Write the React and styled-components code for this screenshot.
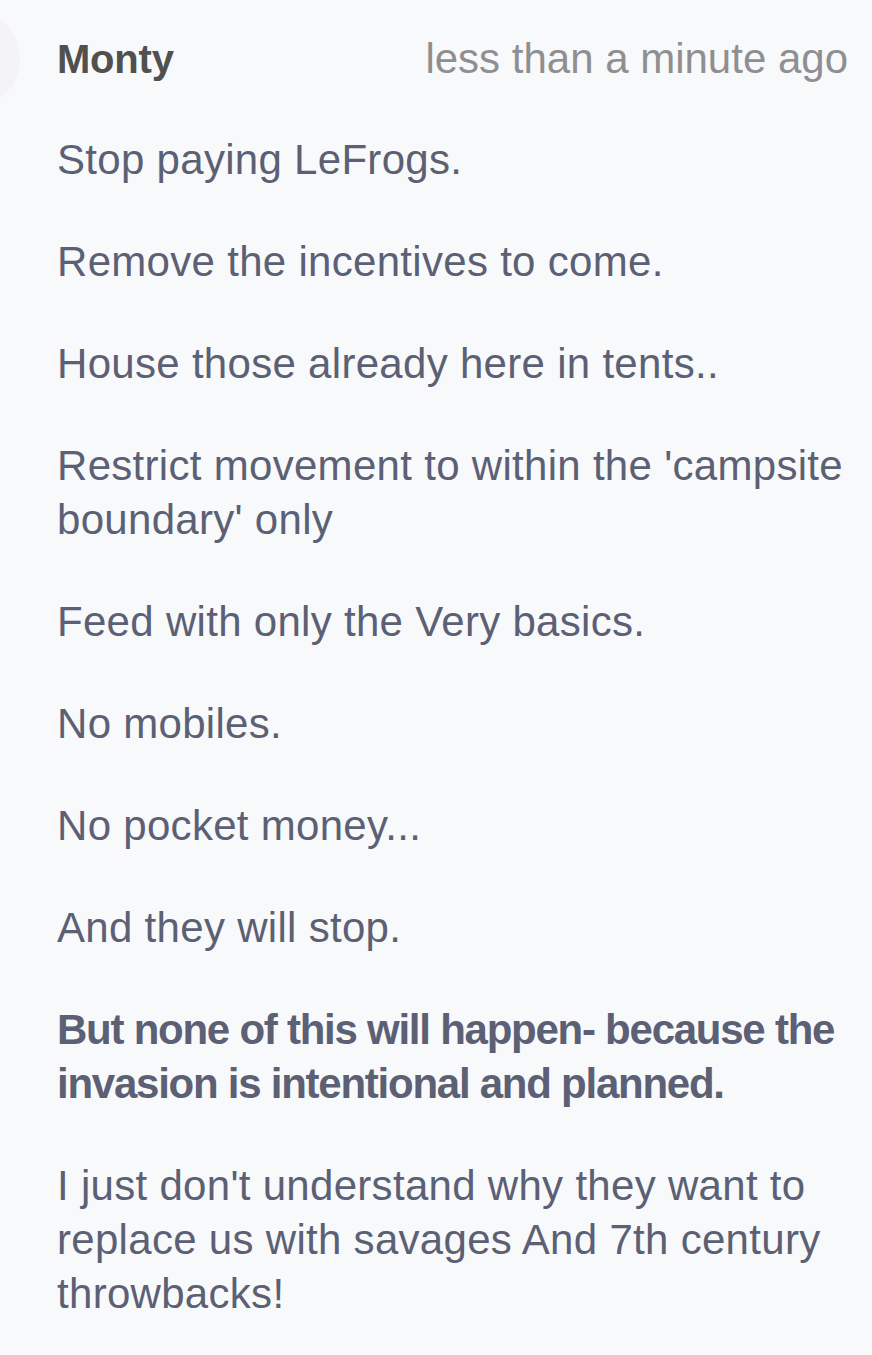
import styled, { createGlobalStyle } from "styled-components";

const paragraphs = [
    { text: "Stop paying LeFrogs." },
    { text: "Remove the incentives to come." },
    { text: "House those already here in tents.." },
    { text: "Restrict movement to within the 'campsite boundary' only" },
    { text: "Feed with only the Very basics." },
    { text: "No mobiles." },
    { text: "No pocket money..." },
    { text: "And they will stop." },
    { text: "But none of this will happen- because the invasion is intentional and planned.", bold: true },
    { text: "I just don't understand why they want to replace us with savages And 7th century throwbacks!" },
];

export default function App() {
    return (
        <>
            <GlobalStyle />
            <Comment>
                <Avatar />
                <Content>
                    <Header>
                        <Author>Monty</Author>
                        <Time>less than a minute ago</Time>
                    </Header>
                    <Body>
                        {paragraphs.map((p, i) => (
                            <Paragraph key={i} $bold={p.bold}>{p.text}</Paragraph>
                        ))}
                    </Body>
                </Content>
            </Comment>
        </>
    );
}

const GlobalStyle = createGlobalStyle`
    html, body {
        margin: 0;
        padding: 0;
        background: #f8f9fb;
    }
    body {
        font-family: "Liberation Sans", Arial, Helvetica, sans-serif;
        -webkit-font-smoothing: antialiased;
    }
`

const Comment = styled.div`
    display: flex;
    align-items: flex-start;
    column-gap: 37px;
    padding: 10px 24px 40px 0;
    min-height: 1355px;
    box-sizing: border-box;
`

const Avatar = styled.div`
    flex: 0 0 auto;
    width: 98px;
    height: 98px;
    margin-left: -78px;
    border-radius: 50%;
    background-color: #f3f3f8;
`

const Content = styled.div`
    flex: 1;
    min-width: 0;
    padding-top: 22px;
`

const Header = styled.div`
    display: flex;
    justify-content: space-between;
    align-items: baseline;
    line-height: 54px;
    margin-bottom: 47px;
`

const Author = styled.span`
    font-size: 40px;
    font-weight: 700;
    color: #50504e;
    letter-spacing: -0.2px;
`

const Time = styled.span`
    font-size: 42px;
    color: #8f8f91;
`

const Body = styled.div`
    display: flex;
    flex-direction: column;
    row-gap: 48px;
`

const Paragraph = styled.p`
    margin: 0;
    font-size: 42px;
    line-height: 54px;
    color: #5c6074;
    font-weight: ${(p) => (p.$bold ? 700 : 400)};
    letter-spacing: ${(p) => (p.$bold ? "-1.25px" : "0.3px")};
`
